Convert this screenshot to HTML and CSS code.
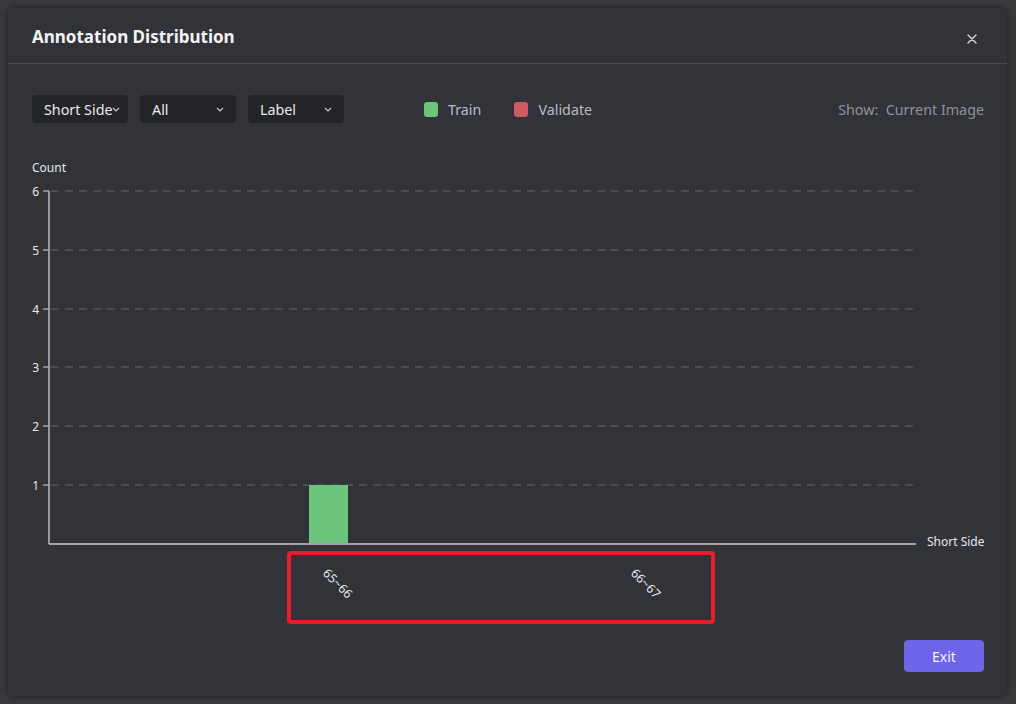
FILE: index.html
```html
<!DOCTYPE html>
<html lang="en">
<head>
<meta charset="utf-8">
<title>Annotation Distribution</title>
<link rel="stylesheet" href="styles.css">
</head>
<body>
<div class="modal">
  <header class="modal-header">
    <h1 class="modal-title">Annotation Distribution</h1>
    <button class="close-btn" aria-label="Close">
      <svg width="10" height="10" viewBox="0 0 10 10"><path d="M1 1L9 9M9 1L1 9" stroke="#c9cad2" stroke-width="1.6" stroke-linecap="round"/></svg>
    </button>
  </header>
  <div class="modal-body">
    <div class="toolbar">
      <div class="selects">
        <div class="select"><span>Short Side</span><svg class="chev chev-tight" width="8" height="5" viewBox="0 0 8 5"><path d="M1 1l3 3 3-3" fill="none" stroke="#c9cad2" stroke-width="1.2"/></svg></div>
        <div class="select"><span>All</span><svg class="chev" width="8" height="5" viewBox="0 0 8 5"><path d="M1 1l3 3 3-3" fill="none" stroke="#c9cad2" stroke-width="1.2"/></svg></div>
        <div class="select"><span>Label</span><svg class="chev" width="8" height="5" viewBox="0 0 8 5"><path d="M1 1l3 3 3-3" fill="none" stroke="#c9cad2" stroke-width="1.2"/></svg></div>
      </div>
      <div class="legend">
        <div class="legend-item"><span class="swatch train"></span>Train</div>
        <div class="legend-item"><span class="swatch validate"></span>Validate</div>
      </div>
      <div class="show">Show:&nbsp; Current Image</div>
    </div>
    <div class="chart">
      <svg width="952" height="475" viewBox="0 0 952 475" font-family="Noto Sans, sans-serif">
        <text x="0" y="17" font-size="12" fill="#e6e7ec">Count</text>
        <g stroke="#55575e" stroke-width="1.5" stroke-dasharray="8 6">
          <line x1="19" y1="36" x2="884" y2="36"/>
          <line x1="19" y1="95" x2="884" y2="95"/>
          <line x1="19" y1="154" x2="884" y2="154"/>
          <line x1="19" y1="212" x2="884" y2="212"/>
          <line x1="19" y1="271" x2="884" y2="271"/>
          <line x1="19" y1="330" x2="884" y2="330"/>
        </g>
        <g stroke="#a3a4aa" stroke-width="1.5">
          <line x1="11" y1="36" x2="17" y2="36"/>
          <line x1="11" y1="95" x2="17" y2="95"/>
          <line x1="11" y1="154" x2="17" y2="154"/>
          <line x1="11" y1="212" x2="17" y2="212"/>
          <line x1="11" y1="271" x2="17" y2="271"/>
          <line x1="11" y1="330" x2="17" y2="330"/>
        </g>
        <g font-size="12" fill="#e6e7ec" text-anchor="end">
          <text x="7" y="41">6</text>
          <text x="7" y="100">5</text>
          <text x="7" y="159">4</text>
          <text x="7" y="217">3</text>
          <text x="7" y="276">2</text>
          <text x="7" y="335">1</text>
        </g>
        <rect x="277" y="330" width="39" height="59" fill="#6cc57a"/>
        <line x1="17" y1="36" x2="17" y2="389" stroke="#a3a4aa" stroke-width="1.8"/>
        <line x1="17" y1="389" x2="884" y2="389" stroke="#a3a4aa" stroke-width="1.8"/>
        <text x="895" y="391" font-size="12" fill="#e6e7ec">Short Side</text>
        <g font-size="12.5" fill="#e6e7ec">
          <text transform="translate(290 419) rotate(45)">65~66</text>
          <text transform="translate(598 419) rotate(45)">66~67</text>
        </g>
        <rect x="257" y="398" width="424" height="69" rx="2" fill="none" stroke="#e61e2a" stroke-width="4"/>
      </svg>
    </div>
    <div class="footer">
      <button class="exit-btn">Exit</button>
    </div>
  </div>
</div>
</body>
</html>
```

FILE: styles.css
```css
* { box-sizing: border-box; }
html, body { margin: 0; height: 100%; }
body {
  padding: 8px 9px 8px 8px;
  background: #3a3a3d;
  font-family: "Noto Sans", "Open Sans", sans-serif;
  overflow: hidden;
}
.modal {
  width: 999px;
  height: 688px;
  background: #323338;
  border-radius: 6px;
  box-shadow: 0 0 6px rgba(0,0,0,0.5);
  display: flex;
  flex-direction: column;
}
.modal-header {
  height: 56px;
  display: flex;
  align-items: center;
  justify-content: space-between;
  padding: 0 30px 0 24px;
  border-bottom: 1px solid #4a4b51;
}
.modal-title {
  margin: 0;
  font-size: 17px;
  font-weight: 700;
  color: #f2f3f7;
  position: relative;
  top: 1px;
}
.close-btn {
  background: none;
  border: 0;
  padding: 0;
  width: 10px;
  height: 10px;
  display: flex;
  position: relative;
  top: 3px;
}
.modal-body {
  flex: 1;
  display: flex;
  flex-direction: column;
  padding: 31px 23px 24px 24px;
}
.toolbar {
  display: flex;
  align-items: center;
  height: 28px;
}
.selects { display: flex; gap: 12px; }
.select {
  width: 96px;
  height: 28px;
  background: #232428;
  border-radius: 4px;
  display: flex;
  align-items: center;
  justify-content: space-between;
  padding: 0 12px;
  font-size: 14.3px;
  color: #e8e9ee;
}
.select .chev-tight { margin-left: -12px; position: relative; left: 4px; }
.legend {
  display: flex;
  gap: 33px;
  margin-left: 80px;
}
.legend-item {
  display: flex;
  align-items: center;
  gap: 10px;
  font-size: 14.3px;
  color: #b9bcc6;
}
.swatch {
  width: 14px;
  height: 15px;
  border-radius: 3px;
  display: inline-block;
}
.swatch.train { background: #6cc57a; }
.swatch.validate { background: #d05a63; }
.show {
  margin-left: auto;
  font-size: 14.3px;
  color: #8e929c;
}
.chart {
  margin-top: 32px;
  height: 475px;
}
.chart svg { display: block; }
.footer {
  margin-top: auto;
  display: flex;
  justify-content: flex-end;
}
.exit-btn {
  width: 80px;
  height: 32px;
  border: 0;
  border-radius: 4px;
  background: #6d64e8;
  color: #f4f4ff;
  font-family: "Noto Sans", sans-serif;
  font-size: 14px;
}
```
